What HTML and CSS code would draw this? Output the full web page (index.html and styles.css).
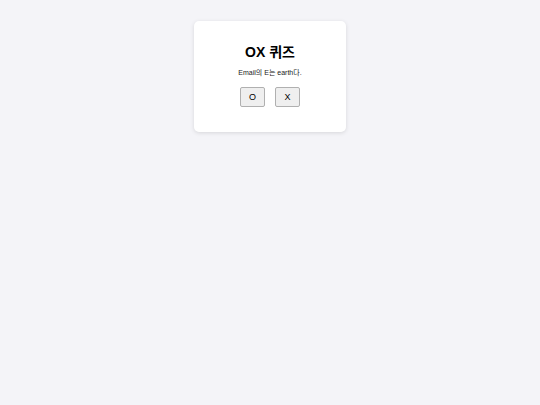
FILE: index.html
```html
<!doctype html>
<html>
<head>
<meta charset="utf-8">
<title>OX 퀴즈</title>
<link rel="stylesheet" href="styles.css">
</head>
<body>
<div class="quiz">
  <h1 class="quiz-title">OX 퀴즈</h1>
  <p class="quiz-question">Email의 E는 earth다.</p>
  <div class="quiz-answers">
    <button class="answer">O</button>
    <button class="answer">X</button>
  </div>
</div>
</body>
</html>
```

FILE: styles.css
```css
html, body {
  margin: 0;
  padding: 0;
  height: 100%;
}
body {
  background: #f4f4f8;
  font-family: "Liberation Sans", Arial, "Noto Sans CJK KR", sans-serif;
  color: #000;
}
.quiz {
  width: 152px;
  box-sizing: border-box;
  margin: 21px auto 0;
  padding: 21px 10px 25px;
  background: #fff;
  border-radius: 5px;
  box-shadow: 0 1px 4px rgba(0, 0, 0, 0.12);
  text-align: center;
}
.quiz-title {
  margin: 0;
  font-size: 14px;
  line-height: 20px;
  font-weight: bold;
}
.quiz-question {
  margin: 6px 0 0;
  font-size: 7px;
  line-height: 10px;
  color: #222;
}
.quiz-answers {
  display: flex;
  justify-content: center;
  gap: 10px;
  margin-top: 9px;
}
.answer {
  width: 25px;
  height: 20px;
  padding: 0;
  font-family: "Liberation Sans", Arial, sans-serif;
  font-size: 9px;
  background: #efefef;
  border: 1px solid #b0b0b0;
  border-radius: 2px;
  color: #000;
}
```
